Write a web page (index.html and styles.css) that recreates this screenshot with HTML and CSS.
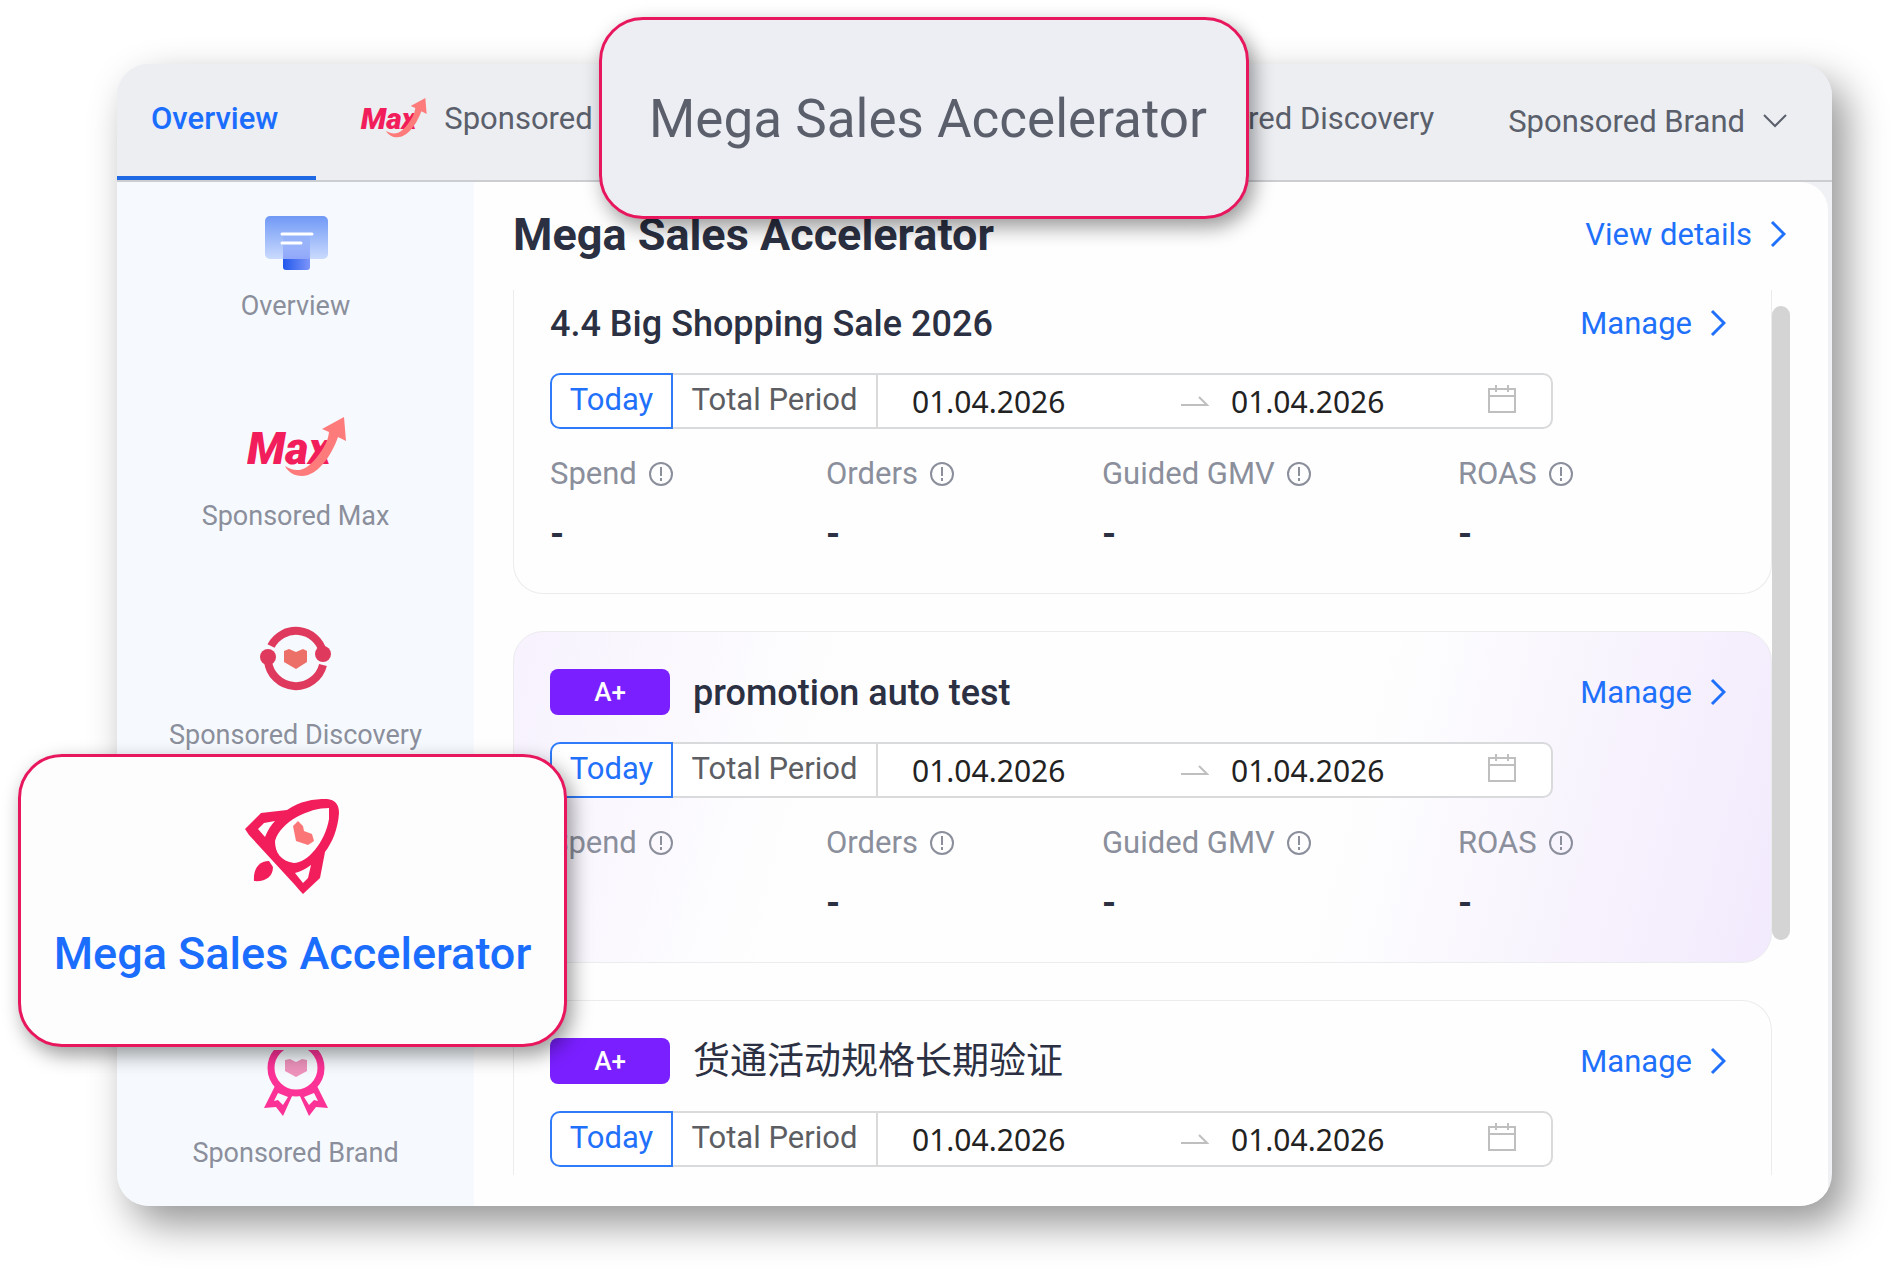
FILE: index.html
```html
<!DOCTYPE html>
<html lang="en">
<head>
    <meta charset="UTF-8">
    <meta name="viewport" content="width=device-width, initial-scale=1.0">
    <title>Mega Sales Accelerator</title>
    <link rel="stylesheet" href="styles.css">
</head>
<body>
    <!-- Shared shapes -->
    <svg class="sprite" aria-hidden="true">
        <symbol id="chevron" viewBox="0 0 16 28">
            <path d="M2 2 L14 14 L2 26" fill="none" stroke="currentColor" stroke-width="3"/>
        </symbol>
        <symbol id="info" viewBox="0 0 26 26">
            <circle cx="13" cy="13" r="11" fill="none" stroke="currentColor" stroke-width="2"/>
            <path d="M13 6v9M13 17v3" stroke="currentColor" stroke-width="2"/>
        </symbol>
        <symbol id="arrow" viewBox="0 0 28 12">
            <path d="M0 10H26L18 2" fill="none" stroke="currentColor" stroke-width="2"/>
        </symbol>
        <symbol id="calendar" viewBox="0 0 30 30">
            <path d="M2 5H28V28H2ZM2 12H28M9 1V8M21 1V8" fill="none" stroke="currentColor" stroke-width="2"/>
        </symbol>
        <symbol id="max" viewBox="0 0 100 60">
            <text x="0" y="47" class="max-text">Max</text>
            <path d="M75 12L97 0L99 24L91 20C84 40 70 59 55 59C47 59 41 55 38 49C50 57 60 53 70 40C77 31 81 24 82 15Z" fill="#fd7c7b"/>
        </symbol>
    </svg>

    <div class="window">
        <nav class="tabs">
            <a class="tab active" href="#">Overview</a>
            <a class="tab" href="#"><svg class="tab-logo"><use href="#max"/></svg>Sponsored Max</a>
            <a class="tab tab-right" href="#">Sponsored Discovery</a>
            <button class="tab tab-menu" type="button">Sponsored Brand
                <svg class="caret" viewBox="0 0 24 14"><path d="M1 1L12 12L23 1" fill="none" stroke="currentColor" stroke-width="2"/></svg>
            </button>
        </nav>

        <div class="body">
            <aside class="sidebar">
                <a class="side-item" href="#">
                    <svg class="side-icon" viewBox="0 0 100 88">
                        <defs>
                            <linearGradient id="screen" x1="0" y1="0" x2="0" y2="1">
                                <stop offset="0" stop-color="#7099f6"/>
                                <stop offset="1" stop-color="#cadafd"/>
                            </linearGradient>
                            <linearGradient id="glow" x1="0" y1="0" x2="0" y2="1">
                                <stop offset="0" stop-color="#7f9ff8" stop-opacity="0"/>
                                <stop offset="1" stop-color="#8fa6fa"/>
                            </linearGradient>
                            <linearGradient id="stand">
                                <stop offset="0" stop-color="#2158ec"/>
                                <stop offset="1" stop-color="#7d95f9"/>
                            </linearGradient>
                        </defs>
                        <rect x="37" y="48" width="27" height="19" rx="3" fill="url(#stand)"/>
                        <rect x="19" y="13" width="63" height="43" rx="5" fill="url(#screen)"/>
                        <rect x="37" y="26" width="27" height="30" fill="url(#glow)"/>
                        <path d="M36 31H66M36 40H55" stroke="#fff" stroke-width="3" stroke-linecap="round"/>
                    </svg>
                    Overview
                </a>
                <a class="side-item" href="#">
                    <svg class="side-icon" viewBox="0 0 100 88"><use href="#max" x="1" y="4" width="100" height="60"/></svg>
                    Sponsored Max
                </a>
                <a class="side-item" href="#">
                    <svg class="side-icon side-icon-tall" viewBox="0 0 100 97">
                        <g fill="none" stroke="#df3a5d" stroke-width="8">
                            <path d="M25 23A28 28 0 0 1 77 29"/>
                            <path d="M22 38A28 28 0 0 0 77 42"/>
                        </g>
                        <circle cx="22" cy="34" r="8" fill="#df3a5d"/>
                        <circle cx="77" cy="31" r="8" fill="#df3a5d"/>
                        <path d="M38 28L43 26L50 29L57 26L61 28V39L50 46L38 39Z" fill="#ec6f68"/>
                    </svg>
                    Sponsored Discovery
                </a>
                <a class="side-item side-item-last" href="#">
                    <svg class="side-icon" viewBox="0 0 100 88">
                        <path d="M29 36L18 58L30 57L37 66L47 44M53 44L63 66L70 57L82 58L71 36" fill="#fd3297"/>
                        <path d="M32 43L42 47L37 55L32 50L28 51ZM68 43L58 47L63 55L68 50L72 51Z" fill="#f6fafe"/>
                        <circle cx="50" cy="18" r="25" fill="#f6fafe" stroke="#fd3297" stroke-width="7"/>
                        <path d="M39 10L44 9L50 12L56 9L61 10V21L50 27L39 21Z" fill="#ee93bc"/>
                    </svg>
                    Sponsored Brand
                </a>
            </aside>

            <main class="main">
                <header class="main-head">
                    <h1>Mega Sales Accelerator</h1>
                    <a class="link" href="#">View details <svg class="chevron"><use href="#chevron"/></svg></a>
                </header>

                <div class="list">
                    <section class="card card-cut-top">
                        <div class="card-head">
                            <h2>4.4 Big Shopping Sale 2026</h2>
                            <a class="link" href="#">Manage <svg class="chevron"><use href="#chevron"/></svg></a>
                        </div>
                        <div class="period">
                            <button class="period-btn selected" type="button">Today</button>
                            <button class="period-btn" type="button">Total Period</button>
                            <div class="range">
                                <input class="date date-start" type="text" value="01.04.2026" aria-label="Start date">
                                <svg class="range-arrow"><use href="#arrow"/></svg>
                                <input class="date" type="text" value="01.04.2026" aria-label="End date">
                                <svg class="range-calendar"><use href="#calendar"/></svg>
                            </div>
                        </div>
                        <dl class="stats">
                            <div><dt>Spend <svg class="info"><use href="#info"/></svg></dt><dd>-</dd></div>
                            <div><dt>Orders <svg class="info"><use href="#info"/></svg></dt><dd>-</dd></div>
                            <div><dt>Guided GMV <svg class="info"><use href="#info"/></svg></dt><dd>-</dd></div>
                            <div><dt>ROAS <svg class="info"><use href="#info"/></svg></dt><dd>-</dd></div>
                        </dl>
                    </section>

                    <section class="card card-plus">
                        <div class="card-head">
                            <span class="badge">A+</span>
                            <h2>promotion auto test</h2>
                            <a class="link" href="#">Manage <svg class="chevron"><use href="#chevron"/></svg></a>
                        </div>
                        <div class="period">
                            <button class="period-btn selected" type="button">Today</button>
                            <button class="period-btn" type="button">Total Period</button>
                            <div class="range">
                                <input class="date date-start" type="text" value="01.04.2026" aria-label="Start date">
                                <svg class="range-arrow"><use href="#arrow"/></svg>
                                <input class="date" type="text" value="01.04.2026" aria-label="End date">
                                <svg class="range-calendar"><use href="#calendar"/></svg>
                            </div>
                        </div>
                        <dl class="stats">
                            <div><dt>Spend <svg class="info"><use href="#info"/></svg></dt><dd>-</dd></div>
                            <div><dt>Orders <svg class="info"><use href="#info"/></svg></dt><dd>-</dd></div>
                            <div><dt>Guided GMV <svg class="info"><use href="#info"/></svg></dt><dd>-</dd></div>
                            <div><dt>ROAS <svg class="info"><use href="#info"/></svg></dt><dd>-</dd></div>
                        </dl>
                    </section>

                    <section class="card card-cut-bottom">
                        <div class="card-head">
                            <span class="badge">A+</span>
                            <h2 class="cjk" lang="zh">货通活动规格长期验证</h2>
                            <a class="link" href="#">Manage <svg class="chevron"><use href="#chevron"/></svg></a>
                        </div>
                        <div class="period">
                            <button class="period-btn selected" type="button">Today</button>
                            <button class="period-btn" type="button">Total Period</button>
                            <div class="range">
                                <input class="date date-start" type="text" value="01.04.2026" aria-label="Start date">
                                <svg class="range-arrow"><use href="#arrow"/></svg>
                                <input class="date" type="text" value="01.04.2026" aria-label="End date">
                                <svg class="range-calendar"><use href="#calendar"/></svg>
                            </div>
                        </div>
                    </section>

                    <div class="scrollbar"></div>
                </div>
            </main>
        </div>
    </div>

    <!-- Callouts over the window -->
    <a class="callout callout-tab" href="#">Mega Sales Accelerator</a>
    <a class="callout callout-side" href="#">
        <svg class="rocket" viewBox="0 0 96 96">
            <path fill="#f21d5b" fill-rule="evenodd" d="M0 30L16 14L42 11C55 2 68 0 82 0Q94 1 94 14C93 30 87 44 80 53L75 79L58 95Q55 92 50 86L4 36ZM84 9C64 9 36 22 30 42C30 54 36 62 49 64C62 64 80 44 84 20ZM13 30L19 24L30 22Q24 28 20 38ZM50 74Q58 72 66 66L63 79L58 84Z"/>
            <path fill="#f21d5b" d="M9 82C8 70 14 62 24 62L28 68C28 78 20 83 9 82Z"/>
            <path fill="#fb7777" d="M48 27L53 22L58 27L59 32L67 35L69 42L63 46L51 42Z"/>
        </svg>
        Mega Sales Accelerator
    </a>
</body>
</html>
```
FILE: styles.css
```css
* {
    box-sizing: border-box;
}
body {
    margin: 0;
    padding: 64px 68px 80px 117px;
    font-family: Roboto, "Noto Sans CJK SC", sans-serif;
    font-size: 31px;
    color: #2b3042;
    background: #fff;
    position: relative;
}
a {
    text-decoration: none;
    color: inherit;
}
button,
input {
    font: inherit;
    color: inherit;
    background: none;
    border: none;
    padding: 0;
}
svg {
    flex-shrink: 0;
}
.sprite {
    display: none;
}
.max-text {
    font: italic 900 45px Roboto, sans-serif;
    fill: #f21d5b;
}

/* Window */
.window {
    border-radius: 32px;
    overflow: hidden;
    background: #f0f1f5;
    box-shadow: 14px 18px 40px rgba(0, 0, 0, 0.42);
}
.tabs {
    display: flex;
    height: 118px;
    padding-right: 45px;
    background: #eceef2;
    border-bottom: 2px solid #cbcdd1;
    color: #5a5f6b;
}
.tab {
    display: flex;
    align-items: center;
    padding: 0 38px 8px 44px;
    white-space: nowrap;
}
.tab.active {
    padding: 0 38px 4px 34px;
    border-bottom: 4px solid #2069e5;
    font-weight: 500;
    color: #1b6dfe;
}
.tab-logo {
    width: 68px;
    height: 40px;
    margin-right: 16px;
}
.tab-right {
    margin-left: auto;
}
.tab-menu {
    padding: 0 0 2px 36px;
    cursor: pointer;
}
.caret {
    width: 24px;
    height: 14px;
    margin-left: 18px;
}
.body {
    display: flex;
}

/* Sidebar */
.sidebar {
    display: flex;
    flex-direction: column;
    gap: 94px;
    width: 357px;
    padding-top: 21px;
    background: #f6fafe;
}
.side-item {
    display: flex;
    flex-direction: column;
    align-items: center;
    font-size: 27px;
    line-height: 30px;
    height: 116px;
    color: #8b8f9c;
}
.side-item:has(.side-icon-tall) {
    height: 125px;
}
.side-icon {
    width: 100px;
    height: 88px;
}
.side-icon-tall {
    height: 97px;
}
.side-item-last {
    margin-top: auto;
    margin-bottom: 40px;
}

/* Main */
.main {
    flex: 1;
    min-width: 0;
    margin-right: 4px;
    padding: 22px 38px 31px 39px;
    background: #fefefe;
    border-top-right-radius: 28px;
}
.main-head {
    display: flex;
    align-items: center;
    justify-content: space-between;
    height: 60px;
    margin-bottom: 26px;
    padding-right: 4px;
}
h1,
h2 {
    margin: 0;
}
h1 {
    font-size: 45px;
    font-weight: 700;
}
h2 {
    padding-top: 2px;
    font-size: 36px;
    font-weight: 500;
}
.cjk {
    font-size: 37px;
    font-weight: 400;
    line-height: 46px;
}
.link {
    display: flex;
    align-items: center;
    gap: 18px;
    color: #1f70fa;
}
.chevron {
    width: 16px;
    height: 28px;
}
.list {
    position: relative;
    display: flex;
    flex-direction: column;
    gap: 37px;
    padding-right: 18px;
}
.card {
    height: 332px;
    padding: 37px 45px 0 36px;
    border: 1px solid #ebecee;
    border-radius: 30px;
}
.card-plus {
    background: linear-gradient(105deg, #f7f2fe 0%, #fefefe 25%, #fefefe 65%, #f2eafd 100%);
}
.card-cut-top {
    height: 304px;
    padding-top: 10px;
    border-top: none;
    border-radius: 0 0 30px 30px;
}
.card-cut-bottom {
    height: 175px;
    border-bottom: none;
    border-radius: 30px 30px 0 0;
}
.card-head {
    display: flex;
    align-items: center;
    height: 46px;
    margin-bottom: 27px;
}
.card-head .link {
    margin-left: auto;
}
.badge {
    width: 120px;
    margin-right: 23px;
    border-radius: 8px;
    background: #7a1fff;
    color: #fff;
    font-size: 26px;
    font-weight: 500;
    line-height: 46px;
    text-align: center;
}
.period {
    display: flex;
    max-width: 1003px;
    height: 56px;
}
.period-btn {
    flex-shrink: 0;
    width: 203px;
    padding-bottom: 4px;
    border: 2px solid #d9dadc;
    border-width: 2px 0;
    background: #fff;
    color: #5c5e63;
    cursor: pointer;
}
.period-btn.selected {
    width: 123px;
    border: 2px solid #2f7bfa;
    border-radius: 10px 0 0 10px;
    color: #1f70fa;
}
.range {
    flex: 1;
    min-width: 0;
    display: flex;
    align-items: center;
    padding: 0 34px;
    border: 2px solid #d9dadc;
    border-radius: 0 10px 10px 0;
    background: #fff;
    color: #bfbfbf;
}
.date {
    flex: 1;
    min-width: 0;
    font-family: "Noto Sans", sans-serif;
    font-size: 30px;
    color: #222;
}
.date-start {
    flex: 0 1 269px;
}
.range-arrow {
    width: 28px;
    height: 12px;
    margin-right: 22px;
}
.range-calendar {
    width: 30px;
    height: 30px;
    margin-bottom: 4px;
}
.stats {
    display: grid;
    grid-template-columns: 276px 276px 356px 1fr;
    margin: 27px 0 0;
}
dt {
    display: flex;
    align-items: center;
    gap: 11px;
    line-height: 36px;
    color: #8b8f9c;
}
.info {
    width: 26px;
    height: 26px;
}
dd {
    margin: 20px 0 0;
    font-size: 36px;
    font-weight: 700;
    line-height: 44px;
}
.scrollbar {
    position: absolute;
    top: 16px;
    right: 0;
    width: 18px;
    height: 634px;
    border-radius: 9px;
    background: #d4d4d4;
}

/* Callouts */
.callout {
    position: absolute;
    display: flex;
    flex-direction: column;
    align-items: center;
    justify-content: center;
    border: 3px solid #e8175d;
    border-radius: 44px;
    box-shadow: 5px 8px 20px rgba(0, 0, 0, 0.4);
    white-space: nowrap;
}
.callout-tab {
    left: 599px;
    top: 17px;
    width: 650px;
    height: 202px;
    padding: 2px 0 0 8px;
    background: #eceef3;
    color: #5a5f6b;
    font-size: 53px;
}
.callout-side {
    left: 18px;
    top: 754px;
    width: 549px;
    height: 293px;
    gap: 32px;
    padding-bottom: 22px;
    background: #fdfdfe;
    color: #1b6dfe;
    font-size: 45px;
    font-weight: 500;
}
.rocket {
    width: 96px;
    height: 96px;
}
```
